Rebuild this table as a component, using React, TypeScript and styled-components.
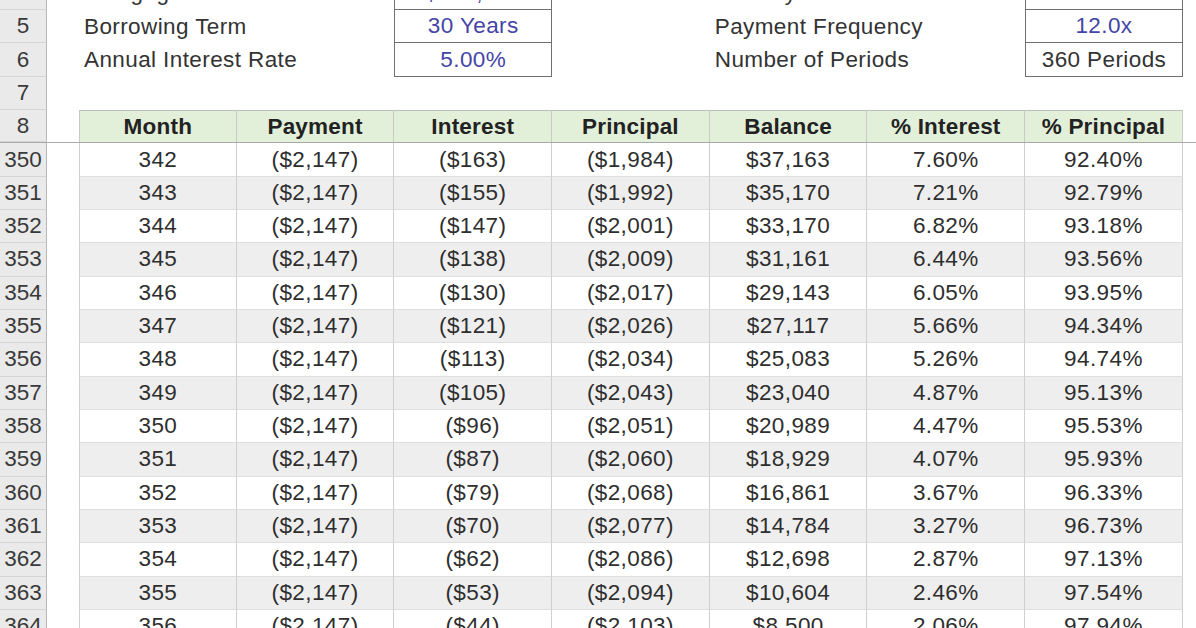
import React from "react";
import styled, { createGlobalStyle, css } from "styled-components";

const GlobalStyle = createGlobalStyle`
  html, body { margin: 0; padding: 0; background: #ffffff; overflow: hidden; }
  body { font-family: "Liberation Sans", Arial, sans-serif; }
`;

const COLS = "47px 32px repeat(7, 157.7px)";
const ROW_H = "33.33px";

const Sheet = styled.div`
  width: 1196px;
  margin-top: -23.3px;
  font-size: 22.5px;
  letter-spacing: 0.4px;
  color: #303030;
`;

const Row = styled.div<{ $freeze?: boolean }>`
  display: grid;
  grid-template-columns: ${COLS};
  height: ${ROW_H};
  box-sizing: border-box;
  ${(p) =>
    p.$freeze &&
    css`
      border-bottom: 1px solid #a9a9a9;
    `}
`;

const RowHead = styled.div`
  background: #eaeaea;
  border-right: 1px solid #b8b8b8;
  border-bottom: 1px solid #d6d6d6;
  color: #3a3a3a;
  display: flex;
  align-items: center;
  justify-content: center;
  box-sizing: border-box;
  overflow: hidden;
  white-space: nowrap;
  letter-spacing: 0;
`;

const Gutter = styled.div``;

const Label = styled.div`
  grid-column: span 2;
  display: flex;
  align-items: center;
  padding-left: 5px;
  white-space: nowrap;
  color: #333;
`;

const Spacer = styled.div``;

const ValueBox = styled.div<{ $input?: boolean; $first?: boolean }>`
  display: flex;
  align-items: center;
  justify-content: center;
  box-sizing: border-box;
  border-left: 1.5px solid #707070;
  border-right: 1.5px solid #707070;
  border-bottom: 1.5px solid #707070;
  ${(p) => p.$first && css`border-top: 1.5px solid #707070;`}
  color: ${(p) => (p.$input ? "#4545a6" : "#333")};
  white-space: nowrap;
`;

const HeadCell = styled.div<{ $first?: boolean }>`
  background: #e2efd9;
  border-top: 1px solid #bdbdbd;
  border-right: 1px solid #c9c9c9;
  ${(p) => p.$first && css`border-left: 1px solid #c9c9c9;`}
  box-sizing: border-box;
  display: flex;
  align-items: center;
  justify-content: center;
  font-weight: bold;
  letter-spacing: 0.2px;
  color: #222;
  white-space: nowrap;
`;

const Cell = styled.div<{ $alt?: boolean; $first?: boolean }>`
  background: ${(p) => (p.$alt ? "#eeeeee" : "#ffffff")};
  border-right: 1px solid #cfcfcf;
  border-bottom: 1px solid #dedede;
  ${(p) => p.$first && css`border-left: 1px solid #cfcfcf;`}
  box-sizing: border-box;
  display: flex;
  align-items: center;
  justify-content: center;
  white-space: nowrap;
  color: #2e2e2e;
`;

const inputs = [
  { n: 4, l: "Mortgage Amount", v: "$400,000", vi: true, r: "Monthly Interest Rate", rv: "0.42%", ri: false },
  { n: 5, l: "Borrowing Term", v: "30 Years", vi: true, r: "Payment Frequency", rv: "12.0x", ri: true },
  { n: 6, l: "Annual Interest Rate", v: "5.00%", vi: true, r: "Number of Periods", rv: "360 Periods", ri: false },
];

const headers = ["Month", "Payment", "Interest", "Principal", "Balance", "% Interest", "% Principal"];

const data: string[][] = [
  ["342", "($163)", "($1,984)", "$37,163", "7.60%", "92.40%"],
  ["343", "($155)", "($1,992)", "$35,170", "7.21%", "92.79%"],
  ["344", "($147)", "($2,001)", "$33,170", "6.82%", "93.18%"],
  ["345", "($138)", "($2,009)", "$31,161", "6.44%", "93.56%"],
  ["346", "($130)", "($2,017)", "$29,143", "6.05%", "93.95%"],
  ["347", "($121)", "($2,026)", "$27,117", "5.66%", "94.34%"],
  ["348", "($113)", "($2,034)", "$25,083", "5.26%", "94.74%"],
  ["349", "($105)", "($2,043)", "$23,040", "4.87%", "95.13%"],
  ["350", "($96)", "($2,051)", "$20,989", "4.47%", "95.53%"],
  ["351", "($87)", "($2,060)", "$18,929", "4.07%", "95.93%"],
  ["352", "($79)", "($2,068)", "$16,861", "3.67%", "96.33%"],
  ["353", "($70)", "($2,077)", "$14,784", "3.27%", "96.73%"],
  ["354", "($62)", "($2,086)", "$12,698", "2.87%", "97.13%"],
  ["355", "($53)", "($2,094)", "$10,604", "2.46%", "97.54%"],
  ["356", "($44)", "($2,103)", "$8,500", "2.06%", "97.94%"],
];

export default function App() {
  return (
    <>
      <GlobalStyle />
      <Sheet>
        {inputs.map((r, i) => (
          <Row key={r.n}>
            <RowHead>{r.n}</RowHead>
            <Gutter />
            <Label>{r.l}</Label>
            <ValueBox $input={r.vi} $first={i === 0}>{r.v}</ValueBox>
            <Spacer />
            <Label>{r.r}</Label>
            <ValueBox $input={r.ri} $first={i === 0}>{r.rv}</ValueBox>
          </Row>
        ))}
        <Row>
          <RowHead>7</RowHead>
        </Row>
        <Row $freeze>
          <RowHead>8</RowHead>
          <Gutter />
          {headers.map((h, i) => (
            <HeadCell key={h} $first={i === 0}>{h}</HeadCell>
          ))}
        </Row>
        {data.map((d, i) => (
          <Row key={d[0]}>
            <RowHead>{350 + i}</RowHead>
            <Gutter />
            <Cell $alt={i % 2 === 1} $first>{d[0]}</Cell>
            <Cell $alt={i % 2 === 1}>($2,147)</Cell>
            {d.slice(1).map((v, j) => (
              <Cell key={j} $alt={i % 2 === 1}>{v}</Cell>
            ))}
          </Row>
        ))}
      </Sheet>
    </>
  );
}
